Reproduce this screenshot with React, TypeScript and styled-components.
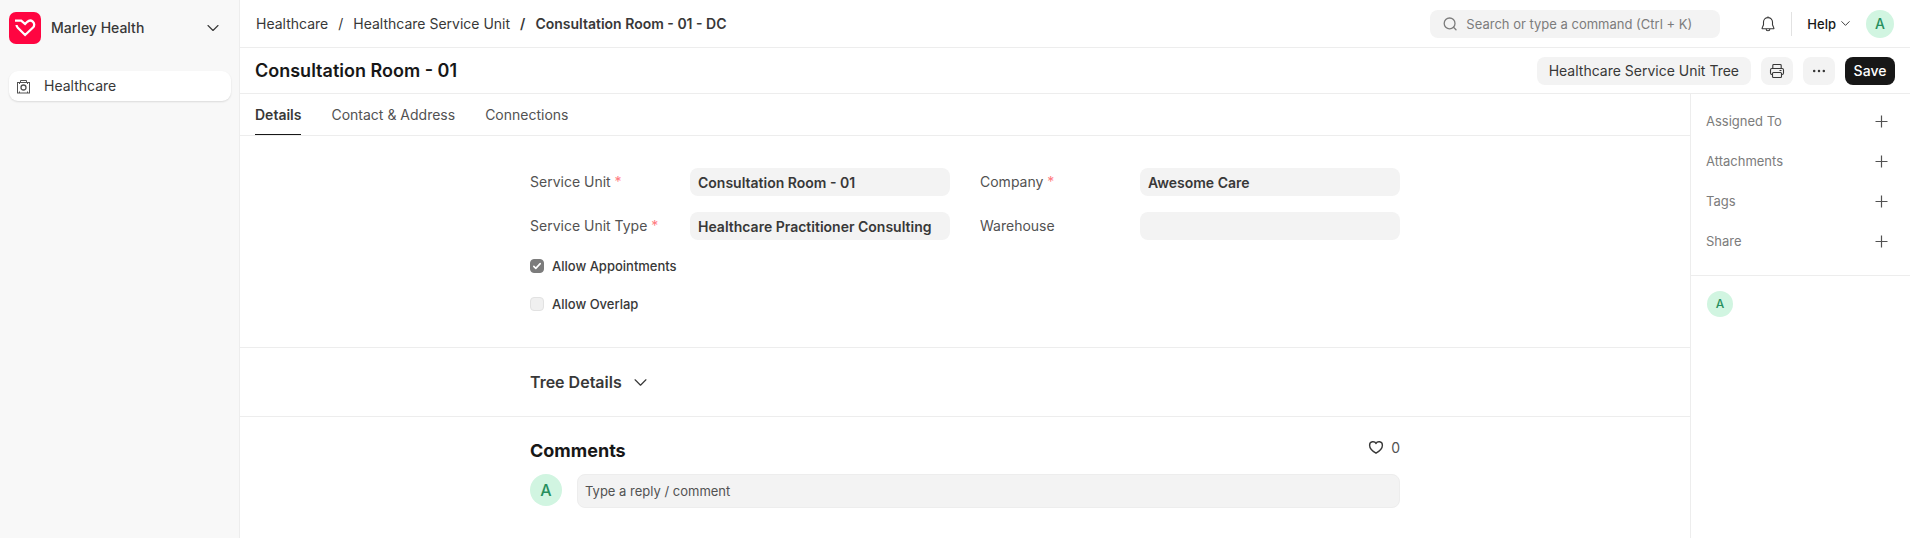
import React, { useState } from 'react';
import styled, { createGlobalStyle, css } from 'styled-components';

const GlobalStyle = createGlobalStyle`
  *, *::before, *::after { box-sizing: border-box; }
  body {
    margin: 0;
    background: #fff;
    color: #383838;
    font-family: Inter, "Liberation Sans", sans-serif;
    font-size: 14px;
    line-height: 20px;
  }
  button, input { font: inherit; color: inherit; }
  button { border: 0; padding: 0; background: none; cursor: pointer; }
  a { color: inherit; text-decoration: none; }
  h1, h2, ol, ul { margin: 0; padding: 0; list-style: none; }
  svg { display: block; flex: none; }
`;

const line = '1px solid #ededed';

const Page = styled.div`
  display: flex;
  min-height: 100vh;
`;

const Sidebar = styled.aside`
  flex: none;
  width: 240px;
  padding: 12px 8px 12px 9px;
  background: #f8f8f8;
  border-right: ${line};
`;

const AppSwitcher = styled.button`
  display: flex;
  align-items: center;
  width: 100%;
  height: 32px;
  padding-right: 12px;
  gap: 10px;
  font-weight: 500;
  text-align: left;
`;

const AppName = styled.span`
  flex: 1;
`;

const SidebarLink = styled.a`
  display: flex;
  align-items: center;
  gap: 13px;
  height: 30px;
  margin-top: 27px;
  padding: 0 7px;
  border-radius: 9px;
  background: #fff;
  box-shadow: 0 1px 2px rgba(0, 0, 0, 0.12);
`;

const Workspace = styled.div`
  display: flex;
  flex: 1;
  flex-direction: column;
  min-width: 0;
`;

const Bar = styled.header<{ $height: number; $pad: number }>`
  display: flex;
  flex: none;
  align-items: center;
  justify-content: space-between;
  height: ${(p) => p.$height}px;
  padding: 0 ${(p) => p.$pad}px;
  border-bottom: ${line};
`;

const Breadcrumbs = styled.ol`
  display: flex;
`;

const Crumb = styled.li<{ $current?: boolean }>`
  font-weight: ${(p) => (p.$current ? 600 : 400)};
  &:not(:first-child)::before {
    content: "/";
    margin: 0 10px;
  }
`;

const BarGroup = styled.div`
  display: flex;
  align-items: center;
  gap: 10px;
`;

const SearchBox = styled.label`
  display: flex;
  align-items: center;
  gap: 8px;
  width: 290px;
  height: 28px;
  margin-right: 25px;
  padding: 0 12px;
  border-radius: 8px;
  background: #f3f3f3;
  color: #7c7c7c;
`;

const SearchInput = styled.input`
  flex: 1;
  min-width: 0;
  padding: 0;
  border: 0;
  outline: 0;
  background: none;
  font-size: 13px;
  &::placeholder { color: #7c7c7c; opacity: 1; }
`;

const BellButton = styled.button`
  padding: 0 5px;
`;

const Divider = styled.span`
  width: 1px;
  height: 24px;
  margin-right: 5px;
  background: #e2e2e2;
`;

const HelpButton = styled.button`
  display: flex;
  align-items: center;
  gap: 5px;
  margin-right: 6px;
  color: #171717;
  font-size: 13px;
  font-weight: 500;
`;

const Avatar = styled.span<{ $size: number; $font: number }>`
  display: flex;
  flex: none;
  align-items: center;
  justify-content: center;
  width: ${(p) => p.$size}px;
  height: ${(p) => p.$size}px;
  border-radius: 50%;
  background: #d1f5e1;
  color: #278f5e;
  font-size: ${(p) => p.$font}px;
  font-weight: 500;
`;

const PageTitle = styled.h1`
  color: #171717;
  font-size: 18px;
  font-weight: 600;
  line-height: 24px;
`;

const Button = styled.button<{ $primary?: boolean; $icon?: boolean }>`
  display: flex;
  align-items: center;
  justify-content: center;
  height: 28px;
  padding: 0 12px;
  border-radius: 8px;
  background: #f3f3f3;
  ${(p) => p.$icon && css`width: 32px; padding: 0;`}
  ${(p) => p.$primary && css`width: 50px; padding: 0; background: #171717; color: #fff; font-weight: 500;`}
`;

const Body = styled.div`
  display: flex;
  flex: 1;
`;

const Main = styled.main`
  flex: 1;
  min-width: 0;
`;

const Tabs = styled.div`
  display: flex;
  gap: 30px;
  height: 42px;
  padding: 0 15px;
  border-bottom: ${line};
`;

const Tab = styled.button<{ $active: boolean }>`
  padding-top: 2px;
  border-bottom: 1px solid ${(p) => (p.$active ? '#171717' : 'transparent')};
  color: ${(p) => (p.$active ? '#383838' : '#525252')};
  font-weight: ${(p) => (p.$active ? 600 : 400)};
`;

const Section = styled.section`
  border-bottom: ${line};
`;

const Content = styled.div`
  width: 100%;
  max-width: 900px;
  margin: 0 auto;
  padding: 0 15px;
`;

const FieldGrid = styled.div`
  display: grid;
  grid-template-columns: 1fr 1fr;
  gap: 16px 30px;
  padding-top: 32px;
`;

const FieldRow = styled.label`
  display: flex;
  align-items: center;
  justify-content: space-between;
  gap: 8px;
  color: #525252;
`;

const Required = styled.span`
  color: #ff7a80;
`;

const FieldInput = styled.input`
  width: 63%;
  max-width: 260px;
  height: 28px;
  padding: 0 8px;
  border: 0;
  border-radius: 8px;
  background: #f3f3f3;
  color: #383838;
  font-weight: 600;
`;

const Checks = styled.div`
  display: flex;
  flex-direction: column;
  align-items: flex-start;
  gap: 18px;
  padding: 16px 0 33px;
`;

const CheckLabel = styled.label`
  display: flex;
  align-items: center;
  gap: 8px;
  font-size: 13px;
  font-weight: 500;
`;

const CheckBox = styled.input`
  appearance: none;
  width: 14px;
  height: 14px;
  margin: 0;
  border: 1px solid #e2e2e2;
  border-radius: 4px;
  background: #f0f0f0;
  &:checked {
    border-color: #7c7c7c;
    background: #7c7c7c url("data:image/svg+xml,%3Csvg xmlns='http://www.w3.org/2000/svg' viewBox='0 0 12 12' fill='none' stroke='white' stroke-width='1.6' stroke-linecap='round' stroke-linejoin='round'%3E%3Cpath d='M2.8 6.4 4.8 8.4 9.2 3.6'/%3E%3C/svg%3E") center / 12px 12px no-repeat;
  }
`;

const CollapseButton = styled.button`
  display: flex;
  align-items: center;
  gap: 12px;
  height: 68px;
  font-size: 16px;
  font-weight: 600;
`;

const CommentsHead = styled.div`
  display: flex;
  align-items: center;
  justify-content: space-between;
  padding: 21px 0 10px;
`;

const CommentsTitle = styled.h2`
  color: #171717;
  font-size: 18px;
  font-weight: 700;
  line-height: 24px;
`;

const LikeButton = styled.button`
  display: flex;
  align-items: center;
  gap: 7px;
  padding-bottom: 6px;
  color: #525252;
`;

const CommentRow = styled.div`
  display: flex;
  align-items: flex-start;
  gap: 15px;
  padding-bottom: 30px;
`;

const CommentInput = styled.input`
  flex: 1;
  min-width: 0;
  height: 34px;
  padding: 0 7px;
  border: 1px solid #ededed;
  border-radius: 8px;
  background: #f3f3f3;
  font-size: 13px;
  &::placeholder { color: #525252; opacity: 1; }
`;

const InfoPanel = styled.aside`
  flex: none;
  width: 220px;
  border-left: ${line};
`;

const InfoList = styled.ul`
  padding: 7px 22px 14px 15px;
  border-bottom: ${line};
`;

const InfoItem = styled.li`
  display: flex;
  align-items: center;
  justify-content: space-between;
  height: 40px;
  color: #7c7c7c;
  font-size: 13px;
`;

const Followers = styled.div`
  padding: 15px 16px;
`;

const Chevron = ({ width }: { width: number }) => (
  <svg width={width} height={width} viewBox="0 0 12 12" fill="none" stroke="currentColor" strokeWidth="1.1" strokeLinecap="round" strokeLinejoin="round">
    <path d="M1 3.5 6 8.5 11 3.5" />
  </svg>
);

const Logo = () => (
  <svg width="32" height="32" viewBox="0 0 32 32" fill="none">
    <rect width="32" height="32" rx="7" fill="#ff0541" />
    <path d="M6 8.6h6.2l3.9 3.4 2.2-2.2c1.5-1.4 3.9-1.6 5.5-.2 1.8 1.6 1.9 4.2.2 5.9L16.1 23 8.8 15.7c-.8-.8-1.2-1.7-1.3-2.7" stroke="#fff" strokeWidth="2.3" />
  </svg>
);

const KitIcon = () => (
  <svg width="15" height="15" viewBox="0 0 15 15" fill="none" stroke="#525252">
    <rect x="1.5" y="3.5" width="12" height="10.5" />
    <path d="M4.5 3.5V1.5h6v2M3.5 3.5v1.5M11.5 3.5v1.5M3.5 14v-1.5M11.5 14v-1.5" />
    <circle cx="7.5" cy="8.5" r="2.5" strokeWidth="1.3" />
  </svg>
);

const SearchIcon = () => (
  <svg width="16" height="16" viewBox="0 0 16 16" fill="none" stroke="currentColor" strokeWidth="1.3" strokeLinecap="round">
    <circle cx="7.6" cy="7.4" r="5.4" />
    <path d="M11.5 11.3 14 13.8" />
  </svg>
);

const BellIcon = () => (
  <svg width="16" height="16" viewBox="0 0 16 16" fill="none" stroke="#383838" strokeWidth="1.1" strokeLinecap="round" strokeLinejoin="round">
    <path d="M3.5 6.1a4.5 4.5 0 0 1 9 0v2.7l1.4 3.3c.1.4-.1.7-.5.7H2.6c-.4 0-.6-.3-.5-.7l1.4-3.3zM6.1 12.9a1.9 1.9 0 0 0 3.8 0M8 .7v.8" />
  </svg>
);

const PrinterIcon = () => (
  <svg width="16" height="16" viewBox="0 0 16 16" fill="none" stroke="#383838" strokeWidth="1.1" strokeLinejoin="round">
    <path d="M3.8 5.5V2.4c0-.5.4-.9.9-.9h6.6c.5 0 .9.4.9.9v3.1" />
    <path d="M3.5 11.5h-.6c-.8 0-1.4-.7-1.4-1.5V7c0-.8.6-1.5 1.4-1.5h10.2c.8 0 1.4.7 1.4 1.5v3c0 .8-.6 1.5-1.4 1.5h-.6" />
    <rect x="3.5" y="9.5" width="9" height="5" rx="1" />
    <path d="M10.5 7.5h2" />
  </svg>
);

const DotsIcon = () => (
  <svg width="16" height="16" viewBox="0 0 16 16" fill="#383838">
    <circle cx="3.2" cy="8" r="1.25" />
    <circle cx="8" cy="8" r="1.25" />
    <circle cx="12.8" cy="8" r="1.25" />
  </svg>
);

const PlusIcon = () => (
  <svg width="13" height="13" viewBox="0 0 13 13" fill="none" stroke="#525252" strokeWidth="1.2">
    <path d="M6.5 .5v12M.5 6.5h12" />
  </svg>
);

const HeartIcon = () => (
  <svg width="16" height="16" viewBox="0 0 16 16" fill="none" stroke="#383838" strokeWidth="1.4" strokeLinejoin="round">
    <path d="M8 3.6C6.9 1 1.6 .9 1.6 5.2c0 2.8 1.8 5.3 6.4 8 4.6-2.7 6.4-5.2 6.4-8 0-4.3-5.3-4.2-6.4-1.6z" />
  </svg>
);

const tabs = ['Details', 'Contact & Address', 'Connections'];

const fields = [
  { label: 'Service Unit', value: 'Consultation Room - 01', required: true },
  { label: 'Company', value: 'Awesome Care', required: true },
  { label: 'Service Unit Type', value: 'Healthcare Practitioner Consulting', required: true },
  { label: 'Warehouse', value: '', required: false },
];

const infoItems = ['Assigned To', 'Attachments', 'Tags', 'Share'];

export default function App() {
  const [activeTab, setActiveTab] = useState('Details');

  return (
    <>
      <GlobalStyle />
      <Page>
        <Sidebar>
          <AppSwitcher>
            <Logo />
            <AppName>Marley Health</AppName>
            <Chevron width={12} />
          </AppSwitcher>
          <nav>
            <SidebarLink href="#healthcare">
              <KitIcon />
              Healthcare
            </SidebarLink>
          </nav>
        </Sidebar>

        <Workspace>
          <Bar $height={48} $pad={16}>
            <nav aria-label="Breadcrumb">
              <Breadcrumbs>
                <Crumb><a href="#healthcare">Healthcare</a></Crumb>
                <Crumb><a href="#units">Healthcare Service Unit</a></Crumb>
                <Crumb $current><a href="#unit">Consultation Room - 01 - DC</a></Crumb>
              </Breadcrumbs>
            </nav>
            <BarGroup>
              <SearchBox>
                <SearchIcon />
                <SearchInput type="text" aria-label="Search" placeholder="Search or type a command (Ctrl + K)" />
              </SearchBox>
              <BellButton aria-label="Notifications"><BellIcon /></BellButton>
              <Divider />
              <HelpButton>Help <Chevron width={9} /></HelpButton>
              <Avatar $size={28} $font={14}>A</Avatar>
            </BarGroup>
          </Bar>

          <Bar $height={46} $pad={15}>
            <PageTitle>Consultation Room - 01</PageTitle>
            <BarGroup>
              <Button>Healthcare Service Unit Tree</Button>
              <Button $icon aria-label="Print"><PrinterIcon /></Button>
              <Button $icon aria-label="More"><DotsIcon /></Button>
              <Button $primary>Save</Button>
            </BarGroup>
          </Bar>

          <Body>
            <Main>
              <Tabs role="tablist">
                {tabs.map((tab) => (
                  <Tab key={tab} role="tab" aria-selected={tab === activeTab} $active={tab === activeTab} onClick={() => setActiveTab(tab)}>
                    {tab}
                  </Tab>
                ))}
              </Tabs>

              <Section>
                <Content>
                  <FieldGrid>
                    {fields.map((field) => (
                      <FieldRow key={field.label}>
                        <span>
                          {field.label} {field.required && <Required>*</Required>}
                        </span>
                        <FieldInput type="text" defaultValue={field.value} />
                      </FieldRow>
                    ))}
                  </FieldGrid>
                  <Checks>
                    <CheckLabel><CheckBox type="checkbox" defaultChecked />Allow Appointments</CheckLabel>
                    <CheckLabel><CheckBox type="checkbox" />Allow Overlap</CheckLabel>
                  </Checks>
                </Content>
              </Section>

              <Section>
                <Content>
                  <CollapseButton aria-expanded={false}>Tree Details <Chevron width={13} /></CollapseButton>
                </Content>
              </Section>

              <Content>
                <CommentsHead>
                  <CommentsTitle>Comments</CommentsTitle>
                  <LikeButton aria-label="Like"><HeartIcon />0</LikeButton>
                </CommentsHead>
                <CommentRow>
                  <Avatar $size={32} $font={16}>A</Avatar>
                  <CommentInput type="text" aria-label="Comment" placeholder="Type a reply / comment" />
                </CommentRow>
              </Content>
            </Main>

            <InfoPanel>
              <InfoList>
                {infoItems.map((item) => (
                  <InfoItem key={item}>
                    {item}
                    <button aria-label={`Add ${item}`}><PlusIcon /></button>
                  </InfoItem>
                ))}
              </InfoList>
              <Followers>
                <Avatar $size={26} $font={12}>A</Avatar>
              </Followers>
            </InfoPanel>
          </Body>
        </Workspace>
      </Page>
    </>
  );
}
